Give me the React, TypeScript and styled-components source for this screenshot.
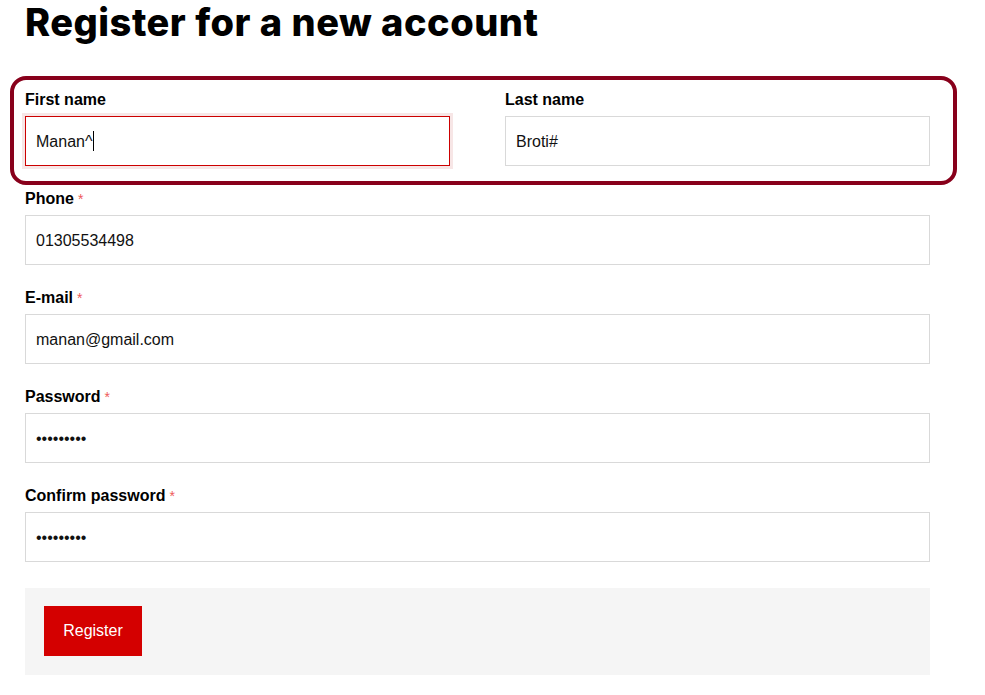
import React from "react";
import styled, { createGlobalStyle } from "styled-components";

const GlobalStyle = createGlobalStyle`
  html, body { margin: 0; padding: 0; background: #fff; }
  body { font-family: "Liberation Sans", Arial, sans-serif; color: #000; }
  * { box-sizing: border-box; }
`;

const Page = styled.div`
  width: 905px;
  margin-left: 25px;
  display: flex;
  flex-direction: column;
`;

const Title = styled.h1`
  margin: 0;
  font-family: Inter, Lato, "Noto Sans", sans-serif;
  font-weight: 800;
  font-size: 38px;
  line-height: 44px;
  letter-spacing: 0.5px;
  color: #000;
`;

const Form = styled.form`
  display: flex;
  flex-direction: column;
  gap: 22px;
  margin-top: 45px;
`;

const NameRow = styled.div`
  position: relative;
  display: grid;
  grid-template-columns: 1fr 1fr;
  column-gap: 55px;
  &::before {
    content: "";
    position: absolute;
    top: -13px;
    left: -15px;
    right: -27px;
    bottom: -19px;
    border: 4px solid #88001b;
    border-radius: 16px;
    pointer-events: none;
  }
`;

const Field = styled.div`
  display: flex;
  flex-direction: column;
`;

const Label = styled.label`
  font-size: 16px;
  font-weight: 700;
  line-height: 20px;
  padding-top: 1px;
  margin-bottom: 6px;
  color: #000;
`;

const Star = styled.span`
  color: #ee5a5a;
  font-weight: 400;
  font-size: 14px;
  margin-left: 4px;
  vertical-align: top;
`;

const InputWrap = styled.div`
  position: relative;
`;

const Input = styled.input<{ $focused?: boolean }>`
  display: block;
  width: 100%;
  height: 50px;
  padding: 2px 10px 0;
  border: 1px solid ${(p) => (p.$focused ? "#cc0000" : "#d9d9d9")};
  box-shadow: ${(p) => (p.$focused ? "0 0 0 3px #f7e6e6" : "none")};
  background: #fff;
  font-family: "Liberation Sans", Arial, sans-serif;
  font-size: 16px;
  color: #111;
  outline: none;
  border-radius: 0;
`;

const Caret = styled.span`
  position: absolute;
  left: 68px;
  top: 15px;
  width: 1px;
  height: 20px;
  background: #000;
`;

const ActionPanel = styled.div`
  margin-top: 4px;
  background: #f5f5f5;
  padding: 18px 19px 19px;
`;

const Button = styled.button`
  width: 98px;
  height: 50px;
  border: none;
  background: #d40000;
  color: #fff;
  font-family: "Liberation Sans", Arial, sans-serif;
  font-size: 16px;
  cursor: pointer;
`;

type F = { label: string; value: string; type?: string; required?: boolean };

const fields: F[] = [
  { label: "Phone", value: "01305534498", required: true },
  { label: "E-mail", value: "manan@gmail.com", required: true },
  { label: "Password", value: "123456789", type: "password", required: true },
  { label: "Confirm password", value: "123456789", type: "password", required: true },
];

export default function App() {
  return (
    <>
      <GlobalStyle />
      <Page>
        <Title>Register for a new account</Title>
        <Form onSubmit={(e) => e.preventDefault()}>
          <NameRow>
            <Field>
              <Label>First name</Label>
              <InputWrap>
                <Input $focused readOnly value="Manan^" />
                <Caret />
              </InputWrap>
            </Field>
            <Field>
              <Label>Last name</Label>
              <Input readOnly value="Broti#" />
            </Field>
          </NameRow>
          {fields.map((f) => (
            <Field key={f.label}>
              <Label>
                {f.label}
                {f.required && <Star>*</Star>}
              </Label>
              <Input readOnly type={f.type ?? "text"} value={f.value} />
            </Field>
          ))}
          <ActionPanel>
            <Button type="submit">Register</Button>
          </ActionPanel>
        </Form>
      </Page>
    </>
  );
}
